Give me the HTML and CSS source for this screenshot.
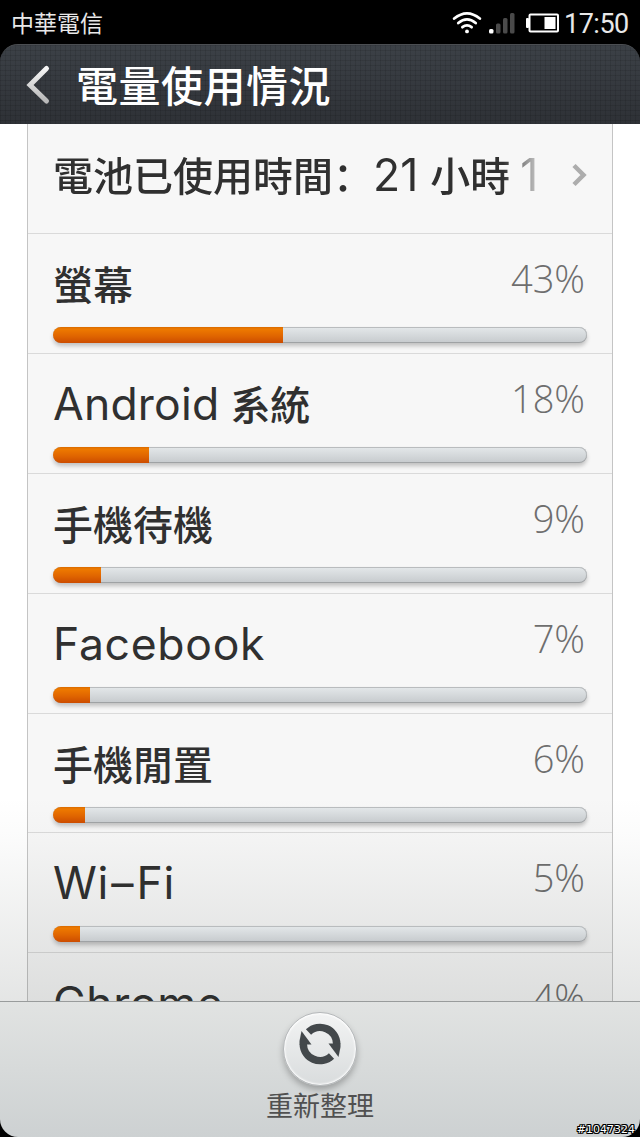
FILE: index.html
```html
<!DOCTYPE html>
<html lang="zh-Hant">
<head>
    <meta charset="UTF-8">
    <meta name="viewport" content="width=device-width, initial-scale=1.0">
    <title>電量使用情況</title>
    <link rel="stylesheet" href="styles.css">
</head>
<body>
<div class="screen">
    <div class="status-bar">
        <span class="carrier">中華電信</span>
        <svg class="wifi" width="30" height="24" viewBox="0 0 30 24" fill="none" stroke="#fff" stroke-width="2.8" stroke-linecap="round">
            <path d="M2.200 7.500Q15 -2.800 27.800 7.500"/>
            <path d="M6.300 12Q15 4.800 23.700 12"/>
            <path d="M10.400 16.200Q15 12.600 19.600 16.200"/>
            <circle cx="15" cy="20.400" r="1.900" fill="#fff" stroke="none"/>
        </svg>
        <svg class="signal" width="28" height="22" viewBox="0 0 28 22">
            <rect x="1" y="17" width="4.500" height="4.500" rx="1.500" fill="#fff"/>
            <rect x="8" y="11.500" width="4.500" height="10" rx="1.500" fill="#4a4a4a"/>
            <rect x="15" y="6" width="4.500" height="15.500" rx="1.500" fill="#4a4a4a"/>
            <rect x="22" y="1" width="4.500" height="20.500" rx="1.500" fill="#4a4a4a"/>
        </svg>
        <svg class="battery" width="34" height="20" viewBox="0 0 34 20">
            <rect x="3.500" y="1.500" width="28.500" height="17" rx="1" fill="none" stroke="#fff" stroke-width="2"/>
            <rect x="0" y="5" width="3" height="10" rx="1" fill="#fff"/>
            <rect x="18.500" y="4" width="11" height="12" fill="#fff"/>
        </svg>
        <span class="clock">17:50</span>
    </div>

    <header class="title-bar">
        <svg class="back" width="26" height="42" viewBox="0 0 26 42" fill="none">
            <defs>
                <linearGradient id="arrow" x1="0" y1="0" x2="0" y2="1">
                    <stop offset="0" stop-color="#f5f5f5"/>
                    <stop offset="1" stop-color="#b9b9b9"/>
                </linearGradient>
            </defs>
            <path d="M21.500 4.500L5 21L21.500 37" stroke="url(#arrow)" stroke-width="5" stroke-linecap="round"/>
        </svg>
        <h1>電量使用情況</h1>
    </header>

    <main class="content">
        <div class="list">
            <div class="summary">
                <div class="summary-text">電池已使用時間<span class="colon" lang="zh-Hans">：</span><span class="latin">21</span><span class="unit">小時</span><span class="latin">1</span></div>
                <svg class="more" width="18" height="26" viewBox="0 0 18 26" fill="none" stroke="#adadad" stroke-width="4.500">
                    <path d="M3 3.500L12.500 13L3 22.500"/>
                </svg>
            </div>
            <div class="item">
                <div class="row"><span class="name">螢幕</span><span class="percent">43%</span></div>
                <div class="bar"><div class="fill" style="width: 43%"></div></div>
            </div>
            <div class="item">
                <div class="row"><span class="name"><span class="latin android">Android</span>系統</span><span class="percent">18%</span></div>
                <div class="bar"><div class="fill" style="width: 18%"></div></div>
            </div>
            <div class="item">
                <div class="row"><span class="name">手機待機</span><span class="percent">9%</span></div>
                <div class="bar"><div class="fill" style="width: 9%"></div></div>
            </div>
            <div class="item">
                <div class="row"><span class="name"><span class="latin">Facebook</span></span><span class="percent">7%</span></div>
                <div class="bar"><div class="fill" style="width: 7%"></div></div>
            </div>
            <div class="item">
                <div class="row"><span class="name">手機閒置</span><span class="percent">6%</span></div>
                <div class="bar"><div class="fill" style="width: 6%"></div></div>
            </div>
            <div class="item">
                <div class="row"><span class="name"><span class="latin">W<span class="dash">i–</span>Fi</span></span><span class="percent">5%</span></div>
                <div class="bar"><div class="fill" style="width: 5%"></div></div>
            </div>
            <div class="item">
                <div class="row"><span class="name"><span class="latin">Chrome</span></span><span class="percent">4%</span></div>
                <div class="bar"><div class="fill" style="width: 4%"></div></div>
            </div>
        </div>
        <div class="shade"></div>
    </main>

    <footer class="toolbar">
        <button class="refresh">
            <svg width="44" height="44" viewBox="0 0 44 44">
                <g id="half">
                    <path d="M10.500 10A16.700 16.700 0 0 1 38.700 22" fill="none" stroke="#43484b" stroke-width="7.500"/>
                    <path d="M30.500 21.500H42.500V25L40.500 35Z" fill="#43484b"/>
                </g>
                <use href="#half" transform="rotate(180 22 22)"/>
            </svg>
        </button>
        <span class="label">重新整理</span>
    </footer>
    <span class="stamp">#1047324</span>
</div>
</body>
</html>
```
FILE: styles.css
```css
body {
    margin: 0;
    background: white;
    font-family: "Noto Sans CJK TC", sans-serif;
}
.screen {
    position: relative;
    display: flex;
    flex-direction: column;
    width: 640px;
    height: 1137px;
    background: black;
    overflow: hidden;
}

/* status bar */
.status-bar {
    display: flex;
    align-items: center;
    box-sizing: border-box;
    height: 44px;
    padding: 2px 11px 0 11px;
    color: #e8e8e8;
}
.carrier {
    flex: 1;
    font-size: 23px;
    line-height: 38px;
    padding-bottom: 3px;
}
.wifi {
    margin-right: 6px;
}
.signal {
    margin-right: 10px;
}
.battery {
    margin-right: 4px;
}
.clock {
    padding-top: 2px;
    font-family: Roboto, sans-serif;
    font-size: 27px;
    line-height: 40px;
    width: 65px;
    letter-spacing: -0.5px;
}

/* title bar */
.title-bar {
    display: flex;
    align-items: center;
    box-sizing: border-box;
    height: 80px;
    padding-left: 25px;
    border-top: 1px solid #4b4e52;
    border-radius: 18px 18px 0 0;
    background:
        repeating-linear-gradient(90deg, rgba(0, 0, 0, 0.1) 0 1px, transparent 1px 5px),
        repeating-linear-gradient(rgba(0, 0, 0, 0.1) 0 1px, transparent 1px 5px),
        linear-gradient(#3c4147, #2e3136);
}
.title-bar h1 {
    margin: 0 0 0 25px;
    color: white;
    font-size: 42px;
    font-weight: 500;
    line-height: 78px;
    padding-bottom: 2px;
    letter-spacing: 0.5px;
}

/* usage list */
.content {
    position: relative;
    height: 877px;
    background: white;
    overflow: hidden;
}
.list {
    box-sizing: border-box;
    width: 586px;
    margin-left: 27px;
    border-left: 1px solid #c4c4c4;
    border-right: 1px solid #c4c4c4;
    background: #f7f7f7;
    color: #303030;
    font-size: 40px;
    font-weight: 500;
}
.summary {
    display: flex;
    align-items: center;
    box-sizing: border-box;
    height: 110px;
    padding: 0 23px 6px 25px;
    border-bottom: 1px solid #dadada;
}
.summary-text {
    flex: 1;
    white-space: nowrap;
    overflow: hidden;
    line-height: 98px;
    padding-bottom: 4px;
    -webkit-mask-image: linear-gradient(90deg, #000 450px, transparent 496px);
    mask-image: linear-gradient(90deg, #000 450px, transparent 496px);
}
.more {
    margin-bottom: 2px;
}
.colon {
    font-family: "Noto Sans CJK SC", sans-serif;
}
.unit {
    margin: 0 10px 0 12px;
}
.latin {
    font-family: Inter, sans-serif;
    font-size: 44.5px;
    font-weight: 400;
    line-height: 40px;
    letter-spacing: 0.7px;
}
.summary .latin {
    letter-spacing: 0;
}
.android {
    margin-right: 11px;
    letter-spacing: 0.2px;
}
.dash {
    letter-spacing: 3px;
}
.item {
    box-sizing: border-box;
    height: 119.9px;
    padding: 18px 25px 0 25px;
    border-bottom: 1px solid #dadada;
}
.row {
    display: flex;
    justify-content: space-between;
    height: 75px;
    line-height: 62px;
}
.percent {
    margin-right: 2px;
    color: #6e6e6e;
    font-family: "Open Sans", sans-serif;
    font-size: 38px;
    font-weight: 300;
    line-height: 53px;
}
.bar {
    position: relative;
    z-index: 1;
    box-sizing: border-box;
    height: 16px;
    border-radius: 8px;
    background: linear-gradient(#e4e8ea, #c6cacd);
    box-shadow: inset 0 1px 0 #b9bcbe, inset 0 -1px 0 #9fa2a4, inset -1px 0 0 #b9bcbe, 0 3px 4px rgba(0, 0, 0, 0.22);
    overflow: hidden;
}
.fill {
    height: 16px;
    background: linear-gradient(#d96a00, #ee7a00 2px, #e06500 9px, #cc4c00);
}
.shade {
    position: absolute;
    left: 0;
    right: 0;
    bottom: 0;
    height: 205px;
    background: linear-gradient(rgba(20, 30, 25, 0), rgba(20, 30, 25, 0.015) 20%, rgba(20, 30, 25, 0.115));
}

/* bottom toolbar */
.toolbar {
    display: flex;
    flex-direction: column;
    align-items: center;
    box-sizing: border-box;
    height: 136px;
    padding-top: 10px;
    border-top: 1px solid #999c9c;
    border-radius: 0 0 18px 18px;
    background: linear-gradient(#e1e3e2, #cdd1d2);
}
.refresh {
    display: flex;
    justify-content: center;
    box-sizing: border-box;
    width: 74px;
    height: 74px;
    padding: 9px 0 0;
    border: 1px solid #b5b8ba;
    border-radius: 50%;
    background: linear-gradient(#f3f4f4, #d9dcdd);
    box-shadow: inset 0 0 2px 1px white, 0 4px 6px rgba(0, 0, 0, 0.25);
}
.label {
    color: #505050;
    font-size: 27px;
    line-height: 38px;
}
.stamp {
    position: absolute;
    right: 5px;
    bottom: 0;
    color: white;
    font-family: "DejaVu Sans", sans-serif;
    font-size: 11px;
    line-height: 14px;
    text-shadow: 1px 0 black, -1px 0 black, 0 1px black, 0 -1px black, 1px 1px black, -1px -1px black, 1px -1px black, -1px 1px black;
}
```
